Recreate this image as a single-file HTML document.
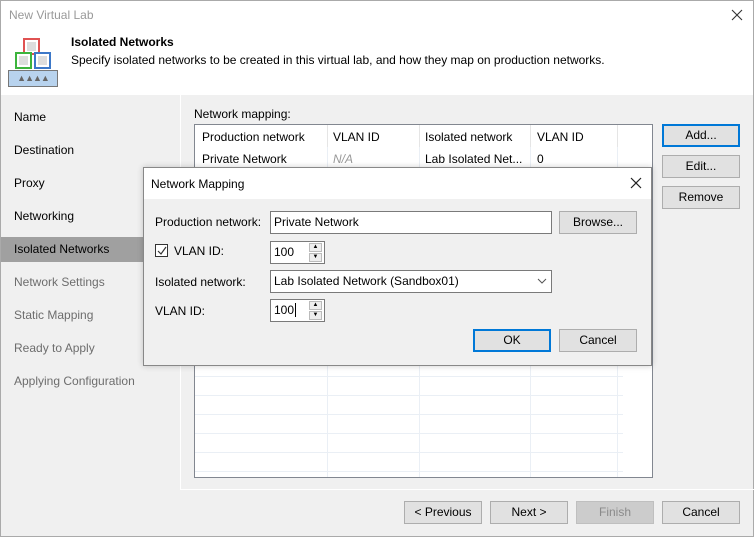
<!DOCTYPE html>
<html><head><style>
*{box-sizing:border-box;margin:0;padding:0}
body{width:754px;height:537px;overflow:hidden;font-family:"Liberation Sans",sans-serif;font-size:12px;color:#000;background:#fff;position:relative}
.a{position:absolute}
.btn{position:absolute;background:#e1e1e1;border:1px solid #adadad;text-align:center;line-height:20px;font-size:12px}
.blue{border:2px solid #0078d7;line-height:18px}
.tb{position:absolute;background:#fff;border:1px solid #7a7a7a;padding-left:3px;line-height:20px}
.nav{position:absolute;left:14px;font-size:12px}
.g{color:#6d6d6d}
</style></head><body>
<div class="a" style="left:0;top:0;width:754px;height:537px;border:1px solid #aaa"></div>
<div class="a" style="left:9px;top:8px;color:#999;font-size:12px">New Virtual Lab</div>
<svg class="a" style="left:731px;top:9px" width="12" height="12"><path d="M1 1L11 11M11 1L1 11" stroke="#333" stroke-width="1.1"/></svg>
<!-- icon -->
<div class="a" style="left:23px;top:38px;width:17px;height:17px;border:2px solid #e05252;background:#fff"><div class="a" style="left:2px;top:2px;width:9px;height:9px;background:#ddd"></div></div>
<div class="a" style="left:15px;top:52px;width:17px;height:17px;border:2px solid #3db43d;background:#fff"><div class="a" style="left:2px;top:2px;width:9px;height:9px;background:#ddd"></div></div>
<div class="a" style="left:34px;top:52px;width:17px;height:17px;border:2px solid #3c78c8;background:#fff"><div class="a" style="left:2px;top:2px;width:9px;height:9px;background:#ddd"></div></div>
<div class="a" style="left:8px;top:70px;width:50px;height:17px;border:1px solid #777;background:#b8d3ee;color:#666;font-size:9px;text-align:center;line-height:15px;letter-spacing:-1px">▲▲▲▲</div>
<div class="a" style="left:71px;top:35px;font-weight:bold;font-size:12px">Isolated Networks</div>
<div class="a" style="left:71px;top:53px;font-size:12px">Specify isolated networks to be created in this virtual lab, and how they map on production networks.</div>
<!-- body -->
<div class="a" style="left:1px;top:95px;width:752px;height:441px;background:#f0f0f0"></div>
<div class="a" style="left:180px;top:95px;width:1px;height:394px;background:#fff"></div>
<div class="a" style="left:180px;top:489px;width:574px;height:1px;background:#fff"></div>
<div class="a" style="left:1px;top:237px;width:180px;height:25px;background:#a0a0a0"></div>
<div class="nav" style="top:110px">Name</div>
<div class="nav" style="top:143px">Destination</div>
<div class="nav" style="top:176px">Proxy</div>
<div class="nav" style="top:209px">Networking</div>
<div class="nav" style="top:242px">Isolated Networks</div>
<div class="nav g" style="top:275px">Network Settings</div>
<div class="nav g" style="top:308px">Static Mapping</div>
<div class="nav g" style="top:341px">Ready to Apply</div>
<div class="nav g" style="top:374px">Applying Configuration</div>
<div class="a" style="left:194px;top:107px">Network mapping:</div>
<div class="a" style="left:194px;top:124px;width:459px;height:354px;background:#fff;border:1px solid #828790;overflow:hidden">
<svg class="a" style="left:0;top:0" width="459" height="354">
<g stroke="#eaeff5" stroke-width="1">
<line x1="132.5" y1="0" x2="132.5" y2="354"/><line x1="224.5" y1="0" x2="224.5" y2="354"/><line x1="335.5" y1="0" x2="335.5" y2="354"/><line x1="422.5" y1="0" x2="422.5" y2="354"/>
<line x1="0" y1="42.5" x2="428" y2="42.5"/><line x1="0" y1="61.5" x2="428" y2="61.5"/><line x1="0" y1="80.5" x2="428" y2="80.5"/><line x1="0" y1="99.5" x2="428" y2="99.5"/><line x1="0" y1="118.5" x2="428" y2="118.5"/><line x1="0" y1="137.5" x2="428" y2="137.5"/><line x1="0" y1="156.5" x2="428" y2="156.5"/><line x1="0" y1="175.5" x2="428" y2="175.5"/><line x1="0" y1="194.5" x2="428" y2="194.5"/><line x1="0" y1="213.5" x2="428" y2="213.5"/><line x1="0" y1="232.5" x2="428" y2="232.5"/><line x1="0" y1="251.5" x2="428" y2="251.5"/><line x1="0" y1="270.5" x2="428" y2="270.5"/><line x1="0" y1="289.5" x2="428" y2="289.5"/><line x1="0" y1="308.5" x2="428" y2="308.5"/><line x1="0" y1="327.5" x2="428" y2="327.5"/><line x1="0" y1="346.5" x2="428" y2="346.5"/>
</g></svg>
<div class="a" style="left:0;top:0;width:459px;height:22px;background:#fff"><svg width="459" height="22"><g stroke="#e5e5e5"><line x1="132.5" y1="0" x2="132.5" y2="22"/><line x1="224.5" y1="0" x2="224.5" y2="22"/><line x1="335.5" y1="0" x2="335.5" y2="22"/><line x1="422.5" y1="0" x2="422.5" y2="22"/></g></svg></div>
<div class="a" style="left:7px;top:5px">Production network</div><div class="a" style="left:138px;top:5px">VLAN ID</div><div class="a" style="left:230px;top:5px">Isolated network</div><div class="a" style="left:342px;top:5px">VLAN ID</div>
<div class="a" style="left:7px;top:27px">Private Network</div><div class="a" style="left:138px;top:27px;color:#999;font-style:italic">N/A</div><div class="a" style="left:230px;top:27px">Lab Isolated Net...</div><div class="a" style="left:342px;top:27px">0</div>
</div>
<div class="btn blue" style="left:662px;top:124px;width:78px;height:23px">Add...</div>
<div class="btn" style="left:662px;top:155px;width:78px;height:23px">Edit...</div>
<div class="btn" style="left:662px;top:186px;width:78px;height:23px">Remove</div>
<div class="btn" style="left:404px;top:501px;width:78px;height:23px">&lt; Previous</div>
<div class="btn" style="left:490px;top:501px;width:78px;height:23px">Next &gt;</div>
<div class="btn" style="left:576px;top:501px;width:78px;height:23px;background:#cccccc;border-color:#bfbfbf;color:#8a8a8a">Finish</div>
<div class="btn" style="left:662px;top:501px;width:78px;height:23px">Cancel</div>
<!-- dialog -->
<div class="a" style="left:143px;top:167px;width:509px;height:199px;background:#f0f0f0;border:1px solid #888;box-shadow:0 0 6px rgba(0,0,0,.2)">
<div class="a" style="left:0;top:0;width:507px;height:31px;background:#fff"></div>
<div class="a" style="left:7px;top:9px;font-size:12px">Network Mapping</div>
<svg class="a" style="left:486px;top:9px" width="12" height="12"><path d="M1 1L11 11M11 1L1 11" stroke="#222" stroke-width="1.2"/></svg>
</div>
<div class="a" style="left:155px;top:215px">Production network:</div>
<div class="tb" style="left:270px;top:211px;width:282px;height:23px">Private Network</div>
<div class="btn" style="left:559px;top:211px;width:78px;height:23px">Browse...</div>
<div class="a" style="left:155px;top:244px;width:13px;height:13px;border:1px solid #333;background:#fff"><svg class="a" style="left:1px;top:1px" width="10" height="10"><path d="M1 5L4 8L9 1" stroke="#333" fill="none" stroke-width="1.2"/></svg></div>
<div class="a" style="left:174px;top:244px">VLAN ID:</div>
<div class="tb" style="left:270px;top:241px;width:55px;height:23px">100</div>
<div class="a" style="left:309px;top:243px;width:13px;height:9px;border:1px solid #bbb;background:#eee;font-size:6px;text-align:center;line-height:7px">▲</div>
<div class="a" style="left:309px;top:253px;width:13px;height:9px;border:1px solid #bbb;background:#eee;font-size:6px;text-align:center;line-height:7px">▼</div>
<div class="a" style="left:155px;top:275px">Isolated network:</div>
<div class="tb" style="left:270px;top:270px;width:282px;height:23px">Lab Isolated Network (Sandbox01)</div>
<svg class="a" style="left:537px;top:278px" width="10" height="6"><path d="M1 1L5 5L9 1" stroke="#555" fill="none"/></svg>
<div class="a" style="left:155px;top:304px">VLAN ID:</div>
<div class="tb" style="left:270px;top:299px;width:55px;height:23px">100<span style="border-left:1px solid #000;margin-left:1px"></span></div>
<div class="a" style="left:309px;top:301px;width:13px;height:9px;border:1px solid #bbb;background:#eee;font-size:6px;text-align:center;line-height:7px">▲</div>
<div class="a" style="left:309px;top:311px;width:13px;height:9px;border:1px solid #bbb;background:#eee;font-size:6px;text-align:center;line-height:7px">▼</div>
<div class="btn blue" style="left:473px;top:329px;width:78px;height:23px">OK</div>
<div class="btn" style="left:559px;top:329px;width:78px;height:23px">Cancel</div>
</body></html>
